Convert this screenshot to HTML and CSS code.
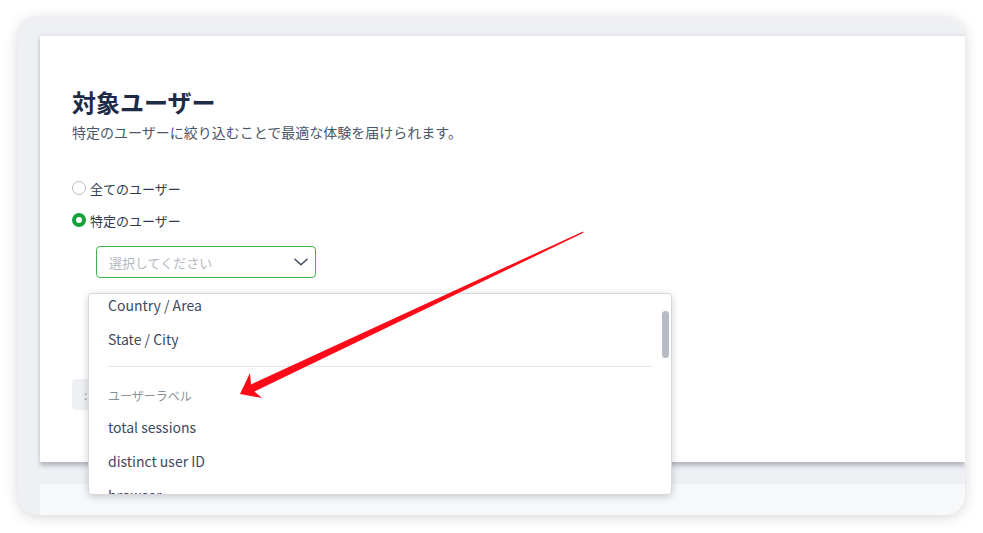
FILE: index.html
```html
<!DOCTYPE html>
<html lang="ja">
<head>
    <meta charset="UTF-8">
    <title>対象ユーザー</title>
    <link rel="stylesheet" href="styles.css">
</head>
<body>
    <div class="frame">
        <div class="card">
            <h1 class="title">対象ユーザー</h1>
            <p class="subtitle">特定のユーザーに絞り込むことで最適な体験を届けられます。</p>

            <div class="radio-group">
                <label class="radio"><span class="dot"></span>全てのユーザー</label>
                <label class="radio checked"><span class="dot"></span>特定のユーザー</label>
            </div>

            <div class="select">
                <span class="placeholder">選択してください</span>
                <svg class="chevron" width="14" height="8" viewBox="0 0 14 8">
                    <path d="M1 1.2 L7 6.8 L13 1.2" fill="none" stroke="#3d4a5f" stroke-width="1.5" stroke-linecap="round" stroke-linejoin="round"/>
                </svg>
            </div>

            <div class="ghost-button">:</div>

            <div class="dropdown">
                <ul class="options">
                    <li>Country / Area</li>
                    <li>State / City</li>
                    <li class="divider"></li>
                    <li class="group-label">ユーザーラベル</li>
                    <li>total sessions</li>
                    <li>distinct user ID</li>
                    <li>browser</li>
                </ul>
                <div class="scrollbar"></div>
            </div>
        </div>
        <div class="lower-panel"></div>
    </div>

    <svg class="annotation" width="983" height="533" viewBox="0 0 983 533">
        <polygon points="583,231.5 251,384.4 250,373 240,394 262,398 254.4,391.6 583.5,232.8" fill="#ff0a18"/>
    </svg>
</body>
</html>
```

FILE: styles.css
```css
body {
    margin: 0;
    background-color: #ffffff;
    font-family: "Noto Sans CJK JP", "Noto Sans", sans-serif;
    color: #3d4a5f;
    width: 983px;
    height: 533px;
    position: relative;
    overflow: hidden;
}
.frame {
    position: absolute;
    left: 18px;
    top: 17px;
    width: 947px;
    height: 498px;
    box-sizing: border-box;
    padding: 18px 0 0 22px;
    display: flex;
    flex-direction: column;
    gap: 21px;
    background-color: #eff0f4;
    border-radius: 20px;
    box-shadow: 0 2px 14px rgba(0, 0, 0, 0.16);
    overflow: hidden;
}
.card {
    position: relative;
    height: 427px;
    flex-shrink: 0;
    box-sizing: border-box;
    padding: 50px 0 0 32px;
    background-color: #ffffff;
    border-top: 1px solid #e3e5ea;
    box-shadow: 0 4px 4px rgba(120, 126, 140, 0.45), 0 0 4px rgba(0, 0, 0, 0.06);
}
.title {
    margin: 0;
    font-size: 24px;
    line-height: 32px;
    font-weight: 700;
    color: #1d2b47;
}
.subtitle {
    margin: 4px 0 0;
    font-size: 14px;
    line-height: 20px;
    color: #4b5669;
}
.radio-group {
    margin-top: 36px;
    display: flex;
    flex-direction: column;
    gap: 12px;
}
.radio {
    display: flex;
    align-items: center;
    gap: 4px;
    height: 20px;
    font-size: 13px;
    color: #2f3b50;
}
.radio .dot {
    width: 14px;
    height: 14px;
    box-sizing: border-box;
    border: 1px solid #b9bec7;
    border-radius: 50%;
    background: #ffffff;
}
.radio.checked .dot {
    border: 4.5px solid #16a23a;
}
.select {
    margin: 16px 0 0 24px;
    width: 220px;
    height: 32px;
    box-sizing: border-box;
    border: 1px solid #3eb54b;
    border-radius: 4px;
    display: flex;
    align-items: center;
    justify-content: space-between;
    padding: 0 7px 0 12px;
    font-size: 13px;
}
.placeholder {
    color: #b3b8c0;
}
.ghost-button {
    margin-top: 101px;
    width: 120px;
    height: 31px;
    border-radius: 4px;
    background-color: #eef0f3;
    color: #9aa1ac;
    font-size: 12px;
    line-height: 31px;
    padding-left: 12px;
    box-sizing: border-box;
}
.dropdown {
    position: absolute;
    left: 48px;
    top: 257px;
    width: 584px;
    height: 202px;
    box-sizing: border-box;
    border: 1px solid #d4d7dd;
    border-radius: 4px;
    background-color: #ffffff;
    box-shadow: 0 2px 8px rgba(0, 0, 0, 0.18);
    overflow: hidden;
}
.options {
    list-style: none;
    margin: -6px 0 0;
    padding: 0;
}
.options li {
    padding: 0 19px;
    font-size: 14px;
    line-height: 34px;
    color: #3d4a5f;
}
.options .divider {
    height: 1px;
    margin: 10px 19px 0;
    padding: 0;
    background-color: #e3e5e9;
}
.options .group-label {
    font-size: 12px;
    line-height: 20px;
    padding-top: 19px;
    padding-bottom: 4px;
    color: #8a909a;
}
.scrollbar {
    position: absolute;
    right: 2px;
    top: 17px;
    width: 7px;
    height: 47px;
    border-radius: 4px;
    background-color: #b6bbc4;
}
.lower-panel {
    flex: 1;
    background-color: #f7f8fa;
    border-top: 1px solid #eceef1;
}
.annotation {
    position: absolute;
    left: 0;
    top: 0;
    pointer-events: none;
}
```
